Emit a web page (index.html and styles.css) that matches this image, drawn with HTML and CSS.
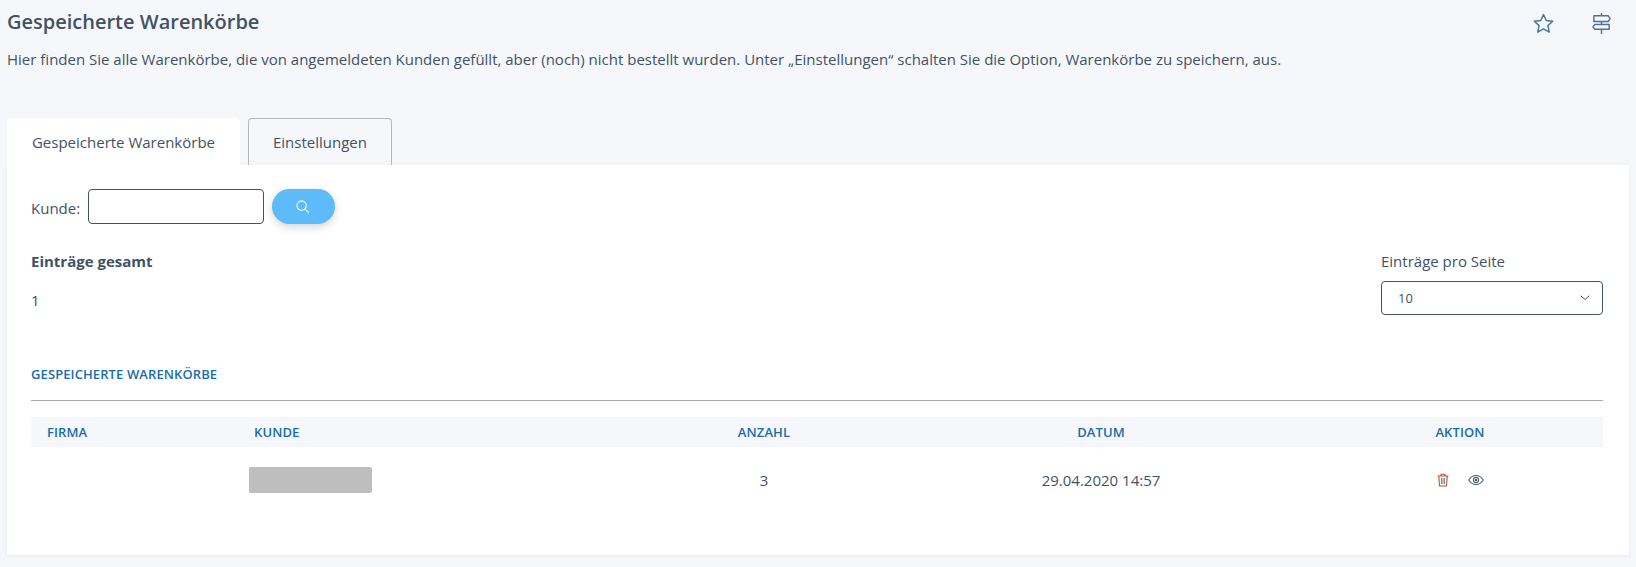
FILE: index.html
```html
<!DOCTYPE html>
<html lang="de">
<head>
<meta charset="utf-8">
<title>Gespeicherte Warenkörbe</title>
<link rel="stylesheet" href="styles.css">
</head>
<body>
<header class="page-head">
  <div class="head-top">
    <h1 class="title">Gespeicherte Warenkörbe</h1>
    <div class="head-icons">
      <svg class="icon-lg" viewBox="0 0 24 24" fill="none" stroke="#4a7396" stroke-width="1.5" stroke-linejoin="round"><path d="M12 2.600l2.900 6.200 6.700.8-5 4.600 1.400 6.700-6-3.400-6 3.400 1.400-6.700-5-4.600 6.700-.8z"/></svg>
      <svg class="icon-lg" viewBox="0 0 24 24" fill="none" stroke="#4a7396" stroke-width="1.5" stroke-linejoin="round"><path d="M12 1v3M12 10v3M12 18v5"/><path d="M4 4h15l2 3-2 3H4z"/><path d="M20 13H5l-2 2.500 2 2.500h15z"/></svg>
    </div>
  </div>
  <p class="desc">Hier finden Sie alle Warenkörbe, die von angemeldeten Kunden gefüllt, aber (noch) nicht bestellt wurden. Unter „Einstellungen“ schalten Sie die Option, Warenkörbe zu speichern, aus.</p>
</header>
<nav class="tabs">
  <div class="tab tab-active">Gespeicherte Warenkörbe</div>
  <div class="tab tab-idle">Einstellungen</div>
</nav>
<main class="card">
  <div class="search">
    <label class="search-label" for="kunde">Kunde:</label>
    <input class="search-input" id="kunde" type="text">
    <button class="search-btn" type="button" aria-label="Suchen">
      <svg class="icon-search" viewBox="0 0 16 16" fill="none" stroke="#fff" stroke-width="1.1" stroke-linecap="round"><circle cx="7" cy="7" r="5"/><path d="M10.700 10.700l3.800 3.800"/></svg>
    </button>
  </div>
  <div class="stats">
    <div class="total">
      <div class="total-label">Einträge gesamt</div>
      <div class="total-value">1</div>
    </div>
    <div class="per-page">
      <div class="per-page-label">Einträge pro Seite</div>
      <div class="select">
        <span>10</span>
        <svg class="icon-chevron" viewBox="0 0 10 6" fill="none" stroke="#3f5364" stroke-width="1" stroke-linecap="round"><path d="M1 1l4 3.500L9 1"/></svg>
      </div>
    </div>
  </div>
  <h2 class="section-title">GESPEICHERTE WARENKÖRBE</h2>
  <div class="table">
    <div class="row row-head">
      <div class="cell cell-firma">FIRMA</div>
      <div class="cell cell-kunde">KUNDE</div>
      <div class="cell cell-anzahl">ANZAHL</div>
      <div class="cell cell-datum">DATUM</div>
      <div class="cell cell-aktion">AKTION</div>
    </div>
    <div class="row row-body">
      <div class="cell cell-firma"></div>
      <div class="cell cell-kunde"><div class="redacted"></div></div>
      <div class="cell cell-anzahl">3</div>
      <div class="cell cell-datum">29.04.2020 14:57</div>
      <div class="cell cell-aktion actions">
        <svg class="icon-action" viewBox="0 0 14 14" fill="none" stroke="#b5562c" stroke-width="1.1"><path d="M1.500 3h11M5 3V1.300h4V3M2.800 3l.7 10h7l.7-10"/><path d="M5.500 5v6M7 5v6M8.500 5v6" stroke="#8a8f92"/></svg>
        <svg class="icon-action icon-eye" viewBox="0 0 16 12" fill="none" stroke="#4d6070" stroke-width="1.1"><path d="M.8 6C2.500 3 5 1.500 8 1.500S13.500 3 15.200 6C13.500 9 11 10.500 8 10.500S2.500 9 .8 6z"/><circle cx="8" cy="6" r="2.600"/><circle cx="8" cy="6" r=".8" fill="#4d6070"/></svg>
      </div>
    </div>
  </div>
</main>
</body>
</html>
```
FILE: styles.css
```css
* { box-sizing: border-box; }
html, body { margin: 0; height: 100%; }
body {
  background: #f6f7fb;
  color: #3f5364;
  font-family: "Open Sans", "Noto Sans", sans-serif;
  font-size: 15px;
  padding: 0 7px;
  overflow: hidden;
}
.page-head { height: 118px; padding-top: 9px; }
.head-top { display: flex; justify-content: space-between; align-items: flex-start; }
.title { margin: 0; font-size: 20px; line-height: 25px; font-weight: 600; color: #3f5364; }
.head-icons { display: flex; gap: 35px; padding-right: 16px; padding-top: 3px; }
.icon-lg { width: 23px; height: 23px; display: block; }
.desc { margin: 14px 0 0; line-height: 20px; color: #3f5364; }
.tabs { display: flex; gap: 8px; height: 47px; }
.tab { height: 47px; line-height: 48px; text-align: center; font-size: 15px; border-radius: 4px 4px 0 0; }
.tab-active { width: 233px; background: #fff; }
.tab-idle { width: 144px; border: 1px solid #b4b8bc; border-bottom: 0; line-height: 46px; }
.card {
  background: #fff;
  height: 390px;
  padding: 24px 26px 0 24px;
  box-shadow: 0 1px 4px rgba(60, 70, 90, 0.07);
}
.search { display: flex; align-items: center; height: 35px; }
.search-label { margin-right: 8px; padding-top: 2px; }
.search-input {
  width: 176px; height: 35px; margin: 0;
  border: 1px solid #3f5364; border-radius: 4px; background: #fff; outline: 0;
}
.search-btn {
  width: 63px; height: 35px; margin: 0 0 0 8px; padding: 0 2px 0 0;
  display: flex; align-items: center; justify-content: center;
  background: #5cbbf8; border: 0; border-radius: 18px;
  box-shadow: 0 3px 8px rgba(60, 70, 90, 0.22);
}
.icon-search { width: 15px; height: 15px; display: block; }
.stats { display: flex; justify-content: space-between; margin-top: 26px; height: 106px; }
.total-label { font-weight: 700; line-height: 22px; }
.total-value { margin-top: 17px; line-height: 22px; }
.per-page { width: 222px; }
.per-page-label { line-height: 22px; }
.select {
  margin-top: 9px; height: 34px; padding: 0 12px 0 16px;
  display: flex; align-items: center; justify-content: space-between;
  border: 1px solid #3f5364; border-radius: 4px; font-size: 13px;
}
.icon-chevron { width: 10px; height: 6px; display: block; }
.section-title {
  margin: 0; height: 45px; padding-top: 8px;
  font-size: 13px; line-height: 20px; font-weight: 600; color: #1a6da8; letter-spacing: 0.1px;
  border-bottom: 1px solid #a9abae;
}
.table { margin-top: 16px; }
.row { display: flex; align-items: center; }
.row-head {
  height: 30px; background: #f6f7fb;
  color: #1a6da8; font-size: 13px; font-weight: 600; letter-spacing: 0.1px;
}
.row-body { height: 66px; }
.cell { flex: none; }
.cell-firma { width: 218px; padding-left: 16px; }
.cell-kunde { width: 394px; }
.row-head .cell-kunde { padding-left: 5px; }
.cell-anzahl { width: 242px; text-align: center; }
.cell-datum { width: 432px; text-align: center; }
.cell-aktion { width: 286px; text-align: center; }
.redacted { width: 123px; height: 26px; background: #bebebe; border-radius: 2px; }
.actions { display: flex; align-items: center; justify-content: center; gap: 18px; }
.icon-action { width: 14px; height: 14px; display: block; }
.icon-eye { width: 16px; height: 12px; }
```
